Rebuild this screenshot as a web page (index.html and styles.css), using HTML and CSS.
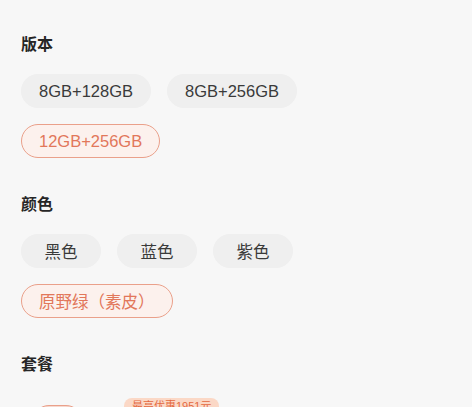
FILE: index.html
```html
<!DOCTYPE html>
<html lang="zh-CN">
<head>
<meta charset="utf-8">
<link rel="stylesheet" href="styles.css">
</head>
<body>
<div class="page">
  <section class="group">
    <h3 class="title">版本</h3>
    <div class="chips">
      <span class="chip">8GB+128GB</span>
      <span class="chip">8GB+256GB</span>
      <span class="chip selected">12GB+256GB</span>
    </div>
  </section>
  <section class="group">
    <h3 class="title">颜色</h3>
    <div class="chips">
      <span class="chip">黑色</span>
      <span class="chip">蓝色</span>
      <span class="chip">紫色</span>
      <span class="chip selected">原野绿（素皮）</span>
    </div>
  </section>
  <section class="group">
    <h3 class="title">套餐</h3>
    <div class="chips pkg">
      <span class="chip selected short"></span>
      <span class="chip tagged"><span class="badge">最高优惠1951元</span></span>
    </div>
  </section>
</div>
</body>
</html>
```
FILE: styles.css
```css
* { box-sizing: border-box; }
html, body {
  margin: 0;
  padding: 0;
  background: #f7f7f7;
  overflow: hidden;
}
body {
  font-family: "Liberation Sans", "Noto Sans CJK SC", sans-serif;
  color: #333;
  width: 472px;
  height: 407px;
}
.page {
  padding: 35px 21px 0 21px;
}
.group {
  margin-bottom: 37px;
}
.title {
  margin: 0 0 19px 0;
  font-size: 16px;
  line-height: 20px;
  font-weight: 700;
  color: #262626;
}
.chips {
  display: flex;
  flex-wrap: wrap;
  gap: 16px;
}
.chip {
  position: relative;
  display: inline-flex;
  align-items: center;
  justify-content: center;
  height: 34px;
  min-width: 80px;
  padding: 0 17px;
  border-radius: 17px;
  background: #efefef;
  border: 1px solid #efefef;
  font-size: 16.5px;
  color: #3a3a3a;
  white-space: nowrap;
}
.chip.selected {
  background: #fcf1ed;
  border: 1.5px solid #eaa08a;
  color: #e2775a;
}
.pkg {
  padding-top: 11px;
  margin-left: 11px;
  height: 60px;
}
.pkg .short {
  width: 51px;
  min-width: 0;
  background: #f6d9cf;
}
.tagged {
  margin-left: 23px;
  width: 110px;
  background: transparent;
  border-color: transparent;
}
.badge {
  position: absolute;
  left: 1px;
  top: -8px;
  height: 16px;
  padding: 0 8px;
  border-radius: 8px 8px 8px 0;
  background: #fbd8c6;
  color: #e4693f;
  font-size: 11px;
  line-height: 16px;
  white-space: nowrap;
}
```
